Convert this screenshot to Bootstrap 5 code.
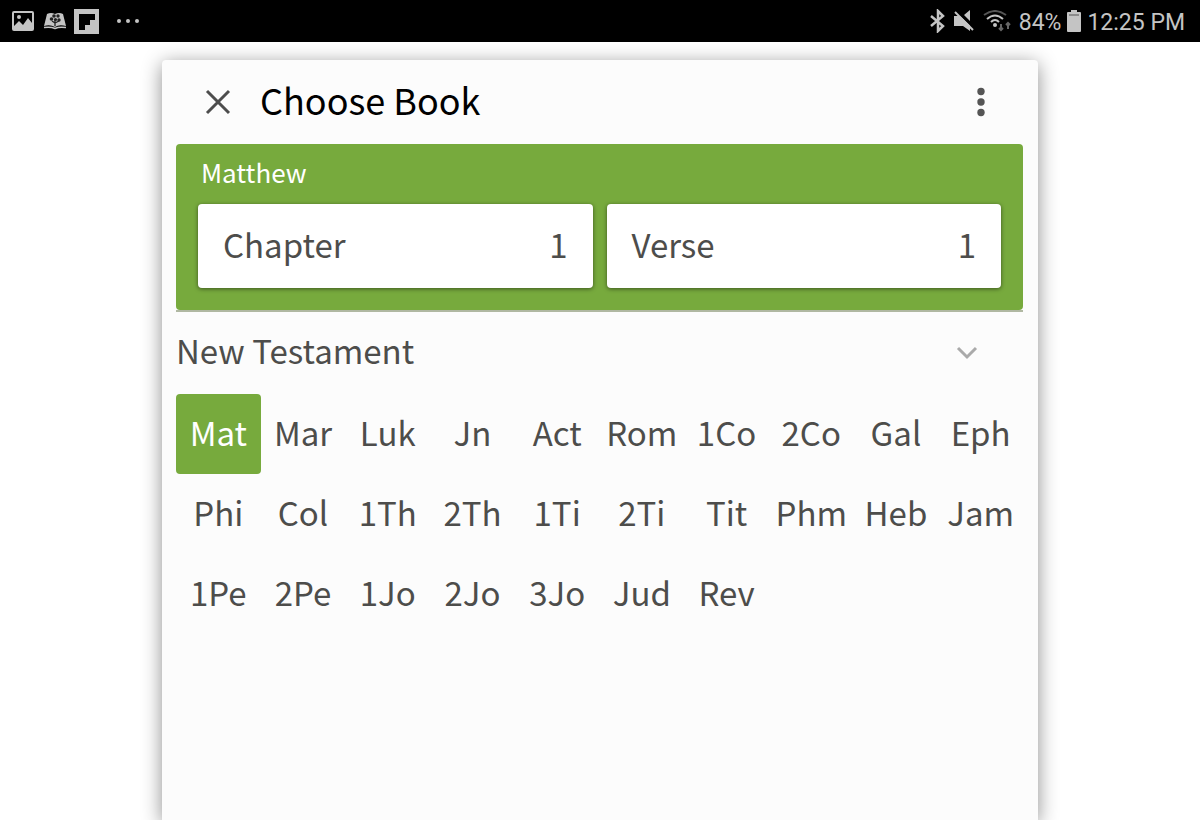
<!DOCTYPE html>
<html lang="en">
<head>
<meta charset="utf-8">
<meta name="viewport" content="width=device-width, initial-scale=1">
<title>Choose Book</title>
<link href="https://cdn.jsdelivr.net/npm/bootstrap@5.3.0/dist/css/bootstrap.min.css" rel="stylesheet">
<style>
:root { --leaf: #77aa3d; --ink: #4d4d4b; }
body { font-family: "Noto Sans CJK SC", "Noto Sans", sans-serif; color: var(--ink); background: #fff; }
.status-bar { height: 42px; background: #000; color: #c4c4c4; font-family: Roboto, sans-serif; font-size: 23px; line-height: 38px; padding: 0 15px 0 12px; }
.status-bar svg { display: block; flex: none; }
.status-bar span, .status-bar time { padding-top: 4px; }
.notices { gap: 8px; }
.radios { gap: 6px; }
.sheet { width: 73%; margin-top: 18px; padding: 0 15px 0 14px; background: #fcfcfc; border-radius: 4px 4px 0 0; box-shadow: 0 4px 20px rgba(0,0,0,.45); }
.sheet-head { height: 84px; padding: 0 24px; }
.sheet-title { font-size: 36px; line-height: 48px; color: #000; font-weight: 400; padding-bottom: 6px; }
.plain { border: 0; background: none; color: inherit; padding: 0; }
.selection { background: var(--leaf); color: #fff; border-radius: 4px; padding: 10px 22px 22px; }
.selection-wrap { border-bottom: 2px solid #b0b8a2; }
.book-name { font-size: 26px; line-height: 36px; padding-left: 3px; margin-bottom: 14px; }
.pick { height: 84px; padding: 0 25px 4px; background: #fff; color: var(--ink); border: 0; border-radius: 4px; box-shadow: 0 1px 4px rgba(0,0,0,.5); font-size: 33px; line-height: 48px; }
.picks { gap: 14px; }
.section-head { height: 82px; font-size: 33px; line-height: 48px; padding-right: 44px; }
.section-head span { padding-bottom: 6px; }
.books { display: grid; grid-template-columns: repeat(10, minmax(0, 1fr)); }
.book { height: 80px; padding-bottom: 4px; font-size: 33px; line-height: 48px; text-align: center; white-space: nowrap; border-radius: 4px; }
.book[aria-pressed="true"] { background: var(--leaf); color: #fff; }
</style>
</head>
<body class="min-vh-100 d-flex flex-column">
<header class="status-bar d-flex align-items-center justify-content-between">
  <div class="notices d-flex align-items-center">
    <svg width="22" height="20" viewBox="0 0 22 20" aria-hidden="true"><rect x="1" y="1" width="20" height="18" rx="1" fill="none" stroke="#c4c4c4" stroke-width="2"/><path d="M2 15l5-5 4 4 5-7 4 5v6H2z" fill="#c4c4c4"/><circle cx="7" cy="6" r="2" fill="#c4c4c4"/></svg>
    <svg width="24" height="18" viewBox="0 0 24 18" aria-hidden="true"><path d="M5 2Q9 0 13 2Q17 0 21 2L24 14Q17 12 13 15Q8 12 2 14z" fill="#c4c4c4"/><path d="M2 15.500q7-1 11 1Q17 14.500 24 15.500" fill="none" stroke="#c4c4c4" stroke-width="1.500"/><path d="M13 14V7M13 11l-3-2M13 11l4-2" stroke="#222" stroke-width="1.300"/><g fill="#222"><circle cx="9.500" cy="7" r="1.800"/><circle cx="12" cy="4" r="1.800"/><circle cx="16" cy="4" r="1.700"/><circle cx="17" cy="8" r="1.700"/><circle cx="13.500" cy="7.500" r="1.600"/></g></svg>
    <svg width="25" height="25" viewBox="0 0 25 25" aria-hidden="true"><path fill="#c4c4c4" d="M0 0h25v25H0z"/><path d="M5 5h16v6h-5v5h-5v5H5z"/></svg>
    <svg class="ms-2" width="25" height="6" viewBox="0 0 25 6" aria-hidden="true"><g fill="#c4c4c4"><circle cx="4" cy="3" r="2"/><circle cx="13" cy="3" r="2"/><circle cx="22" cy="3" r="2"/></g></svg>
  </div>
  <div class="radios d-flex align-items-center">
    <svg width="18" height="24" viewBox="0 0 18 24" aria-hidden="true"><path d="M2 7l12 10-5 5V2l5 5L2 17" fill="none" stroke="#c4c4c4" stroke-width="2.500"/></svg>
    <svg width="24" height="22" viewBox="0 0 24 22" aria-hidden="true"><path d="M1 6h6l10 9v6l-7-5H1zM11 5l6-5v11z" fill="#c4c4c4"/><path d="M3 0l19 19" stroke="#000" stroke-width="2"/><path d="M2 2l18 18" stroke="#c4c4c4" stroke-width="2"/></svg>
    <svg width="30" height="22" viewBox="0 0 30 22" aria-hidden="true"><g fill="none" stroke="#c4c4c4" stroke-width="2"><path d="M1 5Q12-3 23 5" stroke="#555"/><path d="M4 9q8-7 16 0M8 12q4-4 8 0"/></g><circle cx="12" cy="15" r="2" fill="#c4c4c4"/><path d="M18 14v6m-2-2 2 2 2-2M25 19v-6m-2 2 2-2 2 2" fill="none" stroke="#666" stroke-width="2"/></svg>
    <span>84%</span>
    <svg width="14" height="22" viewBox="0 0 14 22" aria-hidden="true"><path d="M4 0h6v2h3a1 1 0 0 1 1 1v18a1 1 0 0 1-1 1H1a1 1 0 0 1-1-1V3a1 1 0 0 1 1-1h3z" fill="#c4c4c4"/><path d="M2 5h10" stroke="#555"/></svg>
    <time>12:25 PM</time>
  </div>
</header>
<main class="sheet mx-auto flex-grow-1">
  <div class="sheet-head d-flex align-items-center">
    <button class="plain" aria-label="Close"><svg class="d-block" width="36" height="36" viewBox="0 0 36 36"><path d="M7 7l22 22M29 7L7 29" stroke="#4d4d4d" stroke-width="3"/></svg></button>
    <h1 class="sheet-title mb-0 ms-4">Choose Book</h1>
    <button class="plain ms-auto" aria-label="More options"><svg class="d-block" width="36" height="36" viewBox="0 0 36 36"><g fill="#555"><circle cx="18" cy="7.500" r="3.700"/><circle cx="18" cy="18" r="3.700"/><circle cx="18" cy="28.500" r="3.700"/></g></svg></button>
  </div>
  <div class="selection-wrap">
    <section class="selection">
      <div class="book-name">Matthew</div>
      <div class="picks d-flex">
        <button class="pick flex-fill w-50 d-flex align-items-center justify-content-between"><span>Chapter</span><span>1</span></button>
        <button class="pick flex-fill w-50 d-flex align-items-center justify-content-between"><span>Verse</span><span>1</span></button>
      </div>
    </section>
  </div>
  <button class="plain section-head w-100 d-flex align-items-center justify-content-between" aria-expanded="true">
    <span>New Testament</span>
    <svg width="24" height="24" viewBox="0 0 24 24" aria-hidden="true"><path d="M3 7l9 9 9-9" fill="none" stroke="#aaa" stroke-width="3"/></svg>
  </button>
  <div class="books">
    <button class="plain book" aria-pressed="true">Mat</button>
    <button class="plain book">Mar</button>
    <button class="plain book">Luk</button>
    <button class="plain book">Jn</button>
    <button class="plain book">Act</button>
    <button class="plain book">Rom</button>
    <button class="plain book">1Co</button>
    <button class="plain book">2Co</button>
    <button class="plain book">Gal</button>
    <button class="plain book">Eph</button>
    <button class="plain book">Phi</button>
    <button class="plain book">Col</button>
    <button class="plain book">1Th</button>
    <button class="plain book">2Th</button>
    <button class="plain book">1Ti</button>
    <button class="plain book">2Ti</button>
    <button class="plain book">Tit</button>
    <button class="plain book">Phm</button>
    <button class="plain book">Heb</button>
    <button class="plain book">Jam</button>
    <button class="plain book">1Pe</button>
    <button class="plain book">2Pe</button>
    <button class="plain book">1Jo</button>
    <button class="plain book">2Jo</button>
    <button class="plain book">3Jo</button>
    <button class="plain book">Jud</button>
    <button class="plain book">Rev</button>
  </div>
</main>
<script src="https://cdn.jsdelivr.net/npm/bootstrap@5.3.0/dist/js/bootstrap.bundle.min.js"></script>
</body>
</html>
